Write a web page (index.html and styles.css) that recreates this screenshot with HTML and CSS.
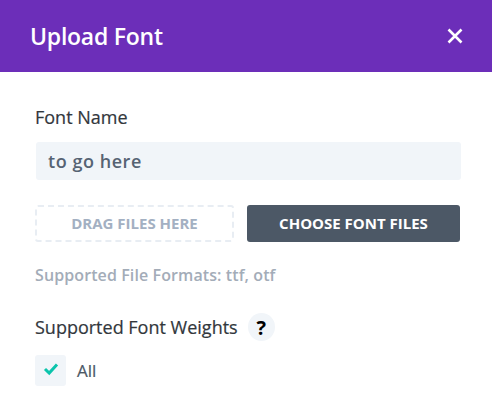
FILE: index.html
```html
<!DOCTYPE html>
<html lang="en">
<head>
    <meta charset="UTF-8">
    <meta name="viewport" content="width=device-width, initial-scale=1.0">
    <title>Upload Font</title>
    <link rel="stylesheet" href="styles.css">
</head>
<body>
    <div class="modal">
        <div class="modal-header">
            <h1>Upload Font</h1>
            <svg class="close-icon" width="16" height="16" viewBox="0 0 16 16" aria-label="Close">
                <path d="M1.5 1.5 L14.5 14.5 M14.5 1.5 L1.5 14.5" stroke="#fff" stroke-width="2.6" fill="none"/>
            </svg>
        </div>
        <div class="modal-body">
            <div class="field-label">Font Name</div>
            <input class="text-input" type="text" value="to go here">
            <div class="upload-row">
                <div class="drop-zone">DRAG FILES HERE</div>
                <button type="button" class="choose-button">CHOOSE FONT FILES</button>
            </div>
            <p class="formats">Supported File Formats: ttf, otf</p>
            <div class="weights-label">
                <span class="field-label">Supported Font Weights</span>
                <span class="help">?</span>
            </div>
            <div class="check-row">
                <span class="checkbox">
                    <svg width="16" height="14" viewBox="0 0 16 14">
                        <path d="M2 7 L6.2 11 L14 2.5" stroke="#0bc4ac" stroke-width="3" fill="none"/>
                    </svg>
                </span>
                <span class="check-label">All</span>
            </div>
        </div>
    </div>
</body>
</html>
```

FILE: styles.css
```css
* {
    box-sizing: border-box;
}
body {
    margin: 0;
    font-family: "Open Sans", sans-serif;
    background: #fff;
    color: #32373c;
}
.modal {
    width: 492px;
    height: 417px;
    overflow: hidden;
}
.modal-header {
    height: 72px;
    background: #6c2eb9;
    padding: 0 29px 0 30px;
    display: flex;
    align-items: center;
    justify-content: space-between;
}
.modal-header h1 {
    margin: 0;
    font-size: 23px;
    font-weight: 600;
    letter-spacing: -0.25px;
    color: #fff;
    line-height: 30px;
}
.close-icon {
    display: block;
}
.modal-body {
    padding: 34px 32px 0 35px;
}
.field-label {
    font-size: 18px;
    font-weight: 400;
    line-height: 22px;
    color: #32373c;
    -webkit-text-stroke: 0.2px #32373c;
}
.text-input {
    display: block;
    width: 425px;
    height: 38px;
    margin: 14px 0 0 1px;
    padding: 0 12px;
    border: none;
    border-radius: 3px;
    background: #f1f5f9;
    font-family: inherit;
    font-size: 18px;
    font-weight: 600;
    letter-spacing: 0.55px;
    color: #566373;
}
.upload-row {
    display: flex;
    gap: 13px;
    margin-top: 25px;
}
.drop-zone {
    width: 199px;
    height: 37px;
    border: 2px dashed #e8edf3;
    border-radius: 3px;
    display: flex;
    align-items: center;
    justify-content: center;
    padding-bottom: 1px;
    font-size: 15px;
    font-weight: 700;
    color: #a3b0c2;
}
.choose-button {
    width: 213px;
    height: 37px;
    border: none;
    border-radius: 3px;
    background: #4c5866;
    font-family: inherit;
    font-size: 15px;
    font-weight: 700;
    color: #fff;
    padding: 0 0 2px;
}
.formats {
    margin: 22px 0 0;
    font-size: 16px;
    font-weight: 600;
    letter-spacing: 0.1px;
    line-height: 22px;
    color: #a3acb8;
}
.weights-label {
    display: flex;
    align-items: center;
    gap: 10px;
    margin-top: 27px;
}
.help {
    width: 27px;
    height: 28px;
    border-radius: 50%;
    background: #f1f5f9;
    display: flex;
    align-items: center;
    justify-content: center;
    font-size: 20px;
    font-weight: 700;
    color: #000;
}
.check-row {
    display: flex;
    align-items: center;
    gap: 11px;
    margin-top: 11px;
}
.checkbox {
    width: 31px;
    height: 31px;
    border-radius: 3px;
    background: #f1f5f9;
    display: flex;
    align-items: center;
    justify-content: center;
    padding-bottom: 3px;
}
.check-label {
    font-size: 17px;
    font-weight: 400;
    line-height: 34px;
    padding-top: 2px;
    color: #4c5866;
    -webkit-text-stroke: 0.2px #4c5866;
}
```
